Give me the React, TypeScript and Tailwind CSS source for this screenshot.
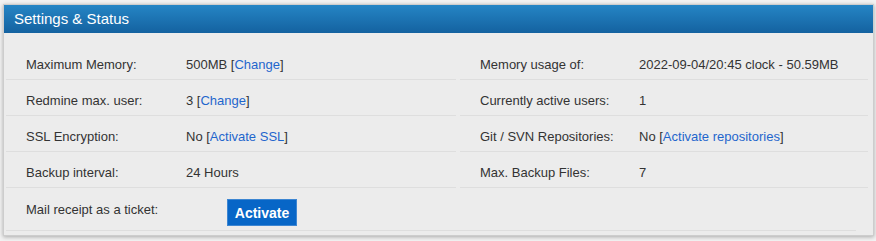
import React from "react";

type Row = { label: string; value: React.ReactNode };

const Link = ({ children }: { children: React.ReactNode }) => (
  <>
    [<a href="#" className="text-[#1f66cc] no-underline">{children}</a>]
  </>
);

const leftRows: Row[] = [
  { label: "Maximum Memory:", value: <>500MB <Link>Change</Link></> },
  { label: "Redmine max. user:", value: <>3 <Link>Change</Link></> },
  { label: "SSL Encryption:", value: <>No <Link>Activate SSL</Link></> },
  { label: "Backup interval:", value: "24 Hours" },
];

const rightRows: Row[] = [
  { label: "Memory usage of:", value: "2022-09-04/20:45 clock - 50.59MB" },
  { label: "Currently active users:", value: "1" },
  { label: "Git / SVN Repositories:", value: <>No <Link>Activate repositories</Link></> },
  { label: "Max. Backup Files:", value: "7" },
];

function Cell({ row, labelWidth }: { row: Row; labelWidth: string }) {
  return (
    <div className="flex h-[36px] border-b border-[#dedede] pl-[20px] pt-[13px] leading-[16px]">
      <div className={labelWidth}>{row.label}</div>
      <div>{row.value}</div>
    </div>
  );
}

export default function App() {
  return (
    <div className="min-h-screen bg-[#f2f2f2] pl-[3px] pt-[4px] font-['Liberation_Sans',Arial,sans-serif] text-[13px] text-[#333]">
      <div className="w-[871px] border border-[#cdcdcd] bg-[#ececec] shadow-[0_1px_4px_rgba(0,0,0,0.3)]">
        <div className="flex h-[28px] items-center bg-gradient-to-b from-[#2585c5] to-[#1462a0] pl-[10px] text-[15px] text-white">
          Settings &amp; Status
        </div>
        <div className="px-[2px] pt-[11px] pb-[4px]">
          <div className="grid grid-cols-[450px_408px] gap-x-[4px]">
            <div>
              {leftRows.map((r) => (
                <Cell key={r.label} row={r} labelWidth="w-[160px]" />
              ))}
            </div>
            <div>
              {rightRows.map((r) => (
                <Cell key={r.label} row={r} labelWidth="w-[159px]" />
              ))}
            </div>
          </div>
          <div className="flex w-[850px] items-start border-b border-[#dedede] pl-[20px] pt-[11px] pb-[4px] leading-[16px]">
            <div className="mt-[3px] w-[201px]">Mail receipt as a ticket:</div>
            <button className="h-[27px] w-[70px] border border-[#3d86d2] bg-[#0766c7] text-[14px] font-bold text-white">
              Activate
            </button>
          </div>
        </div>
      </div>
    </div>
  );
}
